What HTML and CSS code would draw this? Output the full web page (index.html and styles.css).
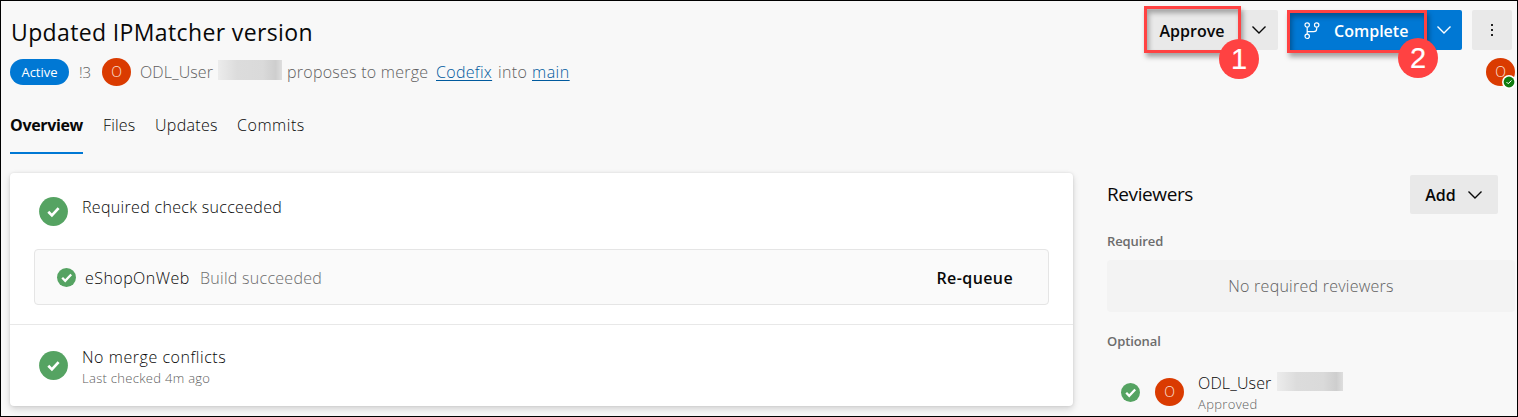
FILE: index.html
```html
<!DOCTYPE html>
<html lang="en">
<head>
<meta charset="utf-8">
<title>Updated IPMatcher version</title>
<link rel="stylesheet" href="styles.css">
</head>
<body>
<svg width="0" height="0" class="defs" aria-hidden="true">
  <symbol id="check" viewBox="0 0 29 29"><circle cx="14.5" cy="14.5" r="14.4" fill="#55a362"/><path d="M9.3 14.8l3.6 3.6 6.7-7.3" fill="none" stroke="#fff" stroke-width="2.7"/></symbol>
  <symbol id="check-small" viewBox="0 0 19 19"><circle cx="9.5" cy="9.5" r="9.500" fill="#55a362"/><path d="M5.200 9.800l3 3 6-6.300" fill="none" stroke="#fff" stroke-width="2.300"/></symbol>
  <symbol id="chevron" viewBox="0 0 16 10"><path d="M1.5 1.5L8 8l6.500-6.500" fill="none" stroke="currentColor" stroke-width="1.400"/></symbol>
</svg>
<div class="page">
  <header class="header">
    <div class="heading">
      <h1 class="title"><span>Updated IPMatcher version</span></h1>
      <div class="meta">
        <span class="status">Active</span>
        <span class="number">!3</span>
        <span class="avatar">O</span>
        <span class="author">ODL_User</span>
        <span class="redacted"></span>
        <span class="proposes">proposes to merge</span>
        <a class="link codefix">Codefix</a>
        <span class="into">into</span>
        <a class="link main">main</a>
      </div>
    </div>
    <div class="side">
      <div class="actions">
        <div class="split gray">
          <button class="btn approve">Approve</button>
          <button class="btn drop"><svg width="16" height="10"><use href="#chevron"/></svg></button>
          <i class="outline outline-approve"></i>
          <b class="step step-one">1</b>
        </div>
        <div class="split blue">
          <button class="btn complete">
            <svg class="branch" width="16" height="18" viewBox="0 0 16 18" fill="none" stroke="currentColor" stroke-width="1.2"><circle cx="3.200" cy="3" r="2.200"/><circle cx="12.700" cy="3" r="2.200"/><circle cx="3.200" cy="14.300" r="2.200"/><path d="M3.200 5.200v6.900M12.700 5.200v1.500q0 3-3 3H3.200"/></svg>
            <span class="complete-label">Complete</span>
          </button>
          <button class="btn drop-blue"><svg width="16" height="10"><use href="#chevron"/></svg></button>
          <i class="outline outline-complete"></i>
          <b class="step step-two">2</b>
        </div>
        <button class="btn more"><svg width="4" height="12" viewBox="0 0 4 12"><path d="M1 0h2v2H1zM1 5h2v2H1zM1 10h2v2H1z" fill="#222"/></svg></button>
      </div>
      <div class="owner"><span class="avatar">O</span>
        <svg class="presence" width="14" height="14" viewBox="0 0 14 14"><circle cx="7" cy="7" r="7" fill="#fff"/><circle cx="7" cy="7" r="5.400" fill="#107c10"/><path d="M4.500 7l1.700 1.700L9.500 5.500" fill="none" stroke="#fff"/></svg>
      </div>
    </div>
  </header>
  <nav class="tabs">
    <span class="tab active">Overview</span>
    <span class="tab files">Files</span>
    <span class="tab updates">Updates</span>
    <span class="tab commits">Commits</span>
  </nav>
  <div class="content">
    <section class="card">
      <div class="check-row">
        <svg width="29" height="29"><use href="#check"/></svg>
        <span class="text required-check">Required check succeeded</span>
      </div>
      <div class="build">
        <svg width="19" height="19"><use href="#check-small"/></svg>
        <span class="text build-name">eShopOnWeb</span>
        <span class="text build-state">Build succeeded</span>
        <span class="requeue">Re-queue</span>
      </div>
      <div class="conflicts">
        <svg width="29" height="29"><use href="#check"/></svg>
        <div>
          <div class="text no-conflicts"><span>No merge conflicts</span></div>
          <div class="small last-checked"><span>Last checked 4m ago</span></div>
        </div>
      </div>
    </section>
    <aside class="reviewers">
      <div class="reviewers-head">
        <h2 class="reviewers-title">Reviewers</h2>
        <button class="btn add"><span>Add</span><svg width="16" height="10"><use href="#chevron"/></svg></button>
      </div>
      <h3 class="label label-required"><span>Required</span></h3>
      <div class="empty"><span>No required reviewers</span></div>
      <h3 class="label label-optional"><span>Optional</span></h3>
      <div class="reviewer">
        <svg width="19" height="19"><use href="#check-small"/></svg>
        <span class="avatar">O</span>
        <div>
          <div class="reviewer-name"><span class="text name">ODL_User</span><span class="redacted redacted-small"></span></div>
          <div class="small approved"><span>Approved</span></div>
        </div>
      </div>
    </aside>
  </div>
</div>
</body>
</html>
```
FILE: styles.css
```css
* { box-sizing: border-box; }
body {
  margin: 0;
  background: #f8f8f8;
  color: #080808;
  font-family: "Open Sans", "Noto Sans", sans-serif;
  font-size: 16px;
  font-weight: 360;
}
h1, h2, h3 { margin: 0; font-weight: 400; }
svg { display: block; flex: none; }
.defs { position: absolute; }
.page {
  width: 1518px;
  height: 417px;
  border: 1px solid #000;
  overflow: hidden;
}
.header { display: flex; height: 103px; padding-left: 9px; }
.heading { flex: 1; padding-top: 15px; white-space: nowrap; }
.title { font-size: 23px; line-height: 32px; letter-spacing: 0.37px; padding-left: 1px; }
.meta { display: flex; align-items: center; height: 30px; margin-top: 9px; color: #606060; line-height: 24px; }
.status {
  width: 59px;
  height: 26px;
  border-radius: 13px;
  background: #0078d4;
  color: #fff;
  font-size: 13px;
  font-weight: 400;
  line-height: 26px;
  text-align: center;
}
.number { width: 23px; margin-left: 10px; font-size: 15px; }
.avatar {
  flex: none;
  width: 29px;
  height: 28px;
  border-radius: 50%;
  background: #da3b01;
  color: #fbe3da;
  font-size: 14px;
  line-height: 28px;
  text-align: center;
}
.author { width: 78px; margin-left: 9px; letter-spacing: 0.1px; }
.redacted {
  width: 64px;
  height: 20px;
  margin-top: -4px;
  background: linear-gradient(90deg, #ececec, #dcdcdc 30%, #dadada 70%, #cecece 90%, #dedede);
}
.proposes { width: 143px; margin-left: 5px; letter-spacing: 0.25px; }
.link { color: #005a9e; text-decoration: underline; text-underline-offset: 2px; }
.codefix { width: 57px; margin-left: 6px; letter-spacing: 0.3px; }
.into { width: 33px; margin-left: 5px; letter-spacing: 0.4px; }
.main { margin-left: 1px; letter-spacing: 0.5px; }
.side { width: 373px; }
.actions { display: flex; padding-top: 9px; }
.split { position: relative; display: flex; height: 40px; border-radius: 2px; }
.gray { width: 134px; background: #e9e9e9; }
.blue { width: 175px; margin-left: 9px; background: #0078d4; color: #fff; }
.btn {
  display: flex;
  align-items: center;
  justify-content: center;
  padding: 0;
  border: 0;
  border-radius: 2px;
  background: none;
  color: inherit;
  font: 600 16px "Open Sans", "Noto Sans", sans-serif;
}
.approve { width: 96px; padding-top: 1px; }
.drop { width: 38px; }
.complete { width: 139px; justify-content: flex-start; padding: 1px 0 0 17px; }
.complete-label { margin-left: 14px; }
.drop-blue { width: 36px; }
.more { width: 40px; height: 40px; margin-left: 10px; background: #e9e9e9; }
.outline { position: absolute; left: 0; border: 3px solid #ff4242; box-shadow: 2px 4px 5px rgba(0,0,0,.35), inset 2px 4px 5px rgba(0,0,0,.3); }
.outline-approve { top: -4px; width: 97px; height: 47px; }
.outline-complete { top: 0; width: 140px; height: 43px; }
.step {
  position: absolute;
  width: 40px;
  height: 40px;
  border-radius: 50%;
  background: #ff4242;
  color: #fff;
  font: 400 29px/40px "Liberation Sans", sans-serif;
  -webkit-text-stroke: 0.2px #fff;
  text-align: center;
}
.step-one { left: 75px; top: 29px; }
.step-two { left: 111px; top: 28px; }
.owner { position: relative; display: flex; margin: 8px 0 0 342px; }
.presence { position: absolute; left: 16px; top: 17px; }
.tabs { display: flex; gap: 20px; height: 50px; padding-left: 9px; }
.tab { height: 50px; line-height: 43px; }
.active { width: 73px; border-bottom: 2px solid #0078d4; font-weight: 700; letter-spacing: -0.35px; }
.files { width: 32px; letter-spacing: 0.2px; }
.updates { width: 62px; letter-spacing: 0.3px; }
.commits { letter-spacing: 0.55px; }
.content { display: flex; padding: 19px 0 0 9px; white-space: nowrap; }
.card {
  width: 1063px;
  height: 233px;
  border-radius: 4px;
  background: #fff;
  box-shadow: 0 3px 7px rgba(0,0,0,.15), 0 0 3px rgba(0,0,0,.1);
}
.check-row { display: flex; gap: 14px; height: 76px; padding: 24px 29px 0; }
.text { line-height: 22px; }
.required-check { margin-top: -1px; letter-spacing: 0.32px; }
.build {
  display: flex;
  align-items: center;
  width: 1015px;
  height: 56px;
  margin-left: 24px;
  padding: 0 35px 0 22px;
  border: 1px solid #e5e5e5;
  border-radius: 4px;
  background: #fafafa;
}
.build-name { width: 106px; margin-left: 9px; padding-top: 2px; letter-spacing: 0.45px; }
.build-state { margin-left: 9px; padding-top: 2px; color: #6c6c6c; letter-spacing: 0.28px; }
.requeue { margin-left: auto; padding-top: 2px; font-weight: 600; letter-spacing: 0.4px; }
.conflicts { display: flex; gap: 14px; margin-top: 19px; padding: 22px 29px 0; border-top: 1px solid #e8e8e8; }
.conflicts svg { margin-top: 4px; }
.no-conflicts { margin-top: -1px; letter-spacing: 0.55px; }
.small { color: #606060; font-size: 13px; line-height: 20px; letter-spacing: 0.3px; }
.reviewers { width: 410px; margin-left: 34px; }
.reviewers-head { display: flex; justify-content: space-between; align-items: center; width: 391px; height: 39px; margin-top: 2px; }
.reviewers-title { margin-top: -2px; font-size: 19px; letter-spacing: -0.4px; }
.add { gap: 11px; width: 88px; height: 39px; background: #e9e9e9; }
.label { color: #6c6c6c; font-size: 13px; font-weight: 600; line-height: 18px; letter-spacing: -0.1px; }
.label-required { margin-top: 18px; }
.empty { width: 408px; height: 52px; margin-top: 10px; border-radius: 4px; background: #f3f3f3; color: #606060; line-height: 52px; letter-spacing: 0.25px; text-align: center; }
.label-optional { margin-top: 20px; }
.reviewer { display: flex; align-items: center; height: 44px; margin-top: 21px; padding-left: 14px; }
.reviewer .avatar { margin: -2px 14px 0 15px; }
.reviewer > svg { margin-top: -1px; }
.reviewer-name { display: flex; align-items: center; }
.name { width: 79px; letter-spacing: 0.15px; }
.approved { letter-spacing: 0.35px; }
.redacted-small { height: 19px; margin-top: -3px; width: 66px; }
```
